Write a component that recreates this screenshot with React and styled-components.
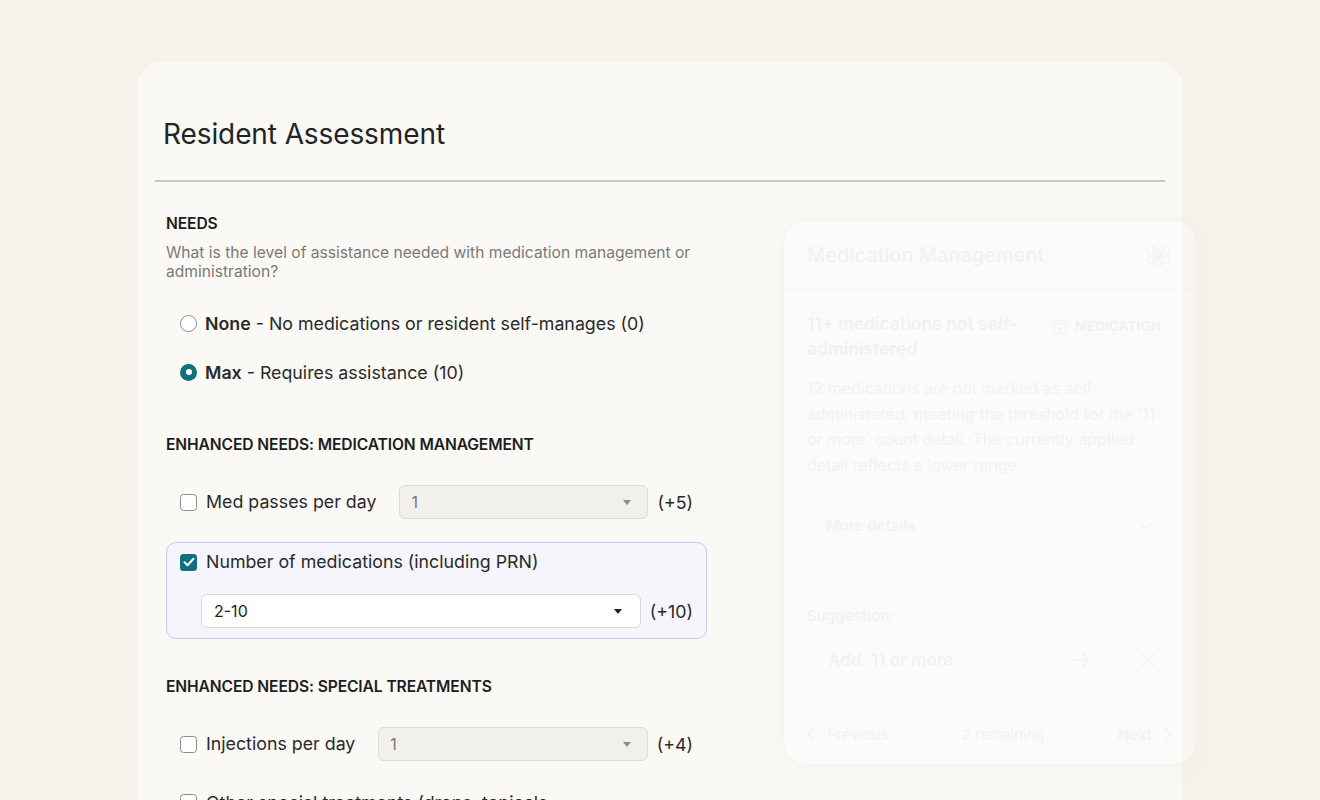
import React from "react";
import styled, { createGlobalStyle } from "styled-components";

const Global = createGlobalStyle`
  html, body { margin: 0; padding: 0; }
  body {
    background: #f6f1ea;
    font-family: Inter, "Noto Sans", "Liberation Sans", sans-serif;
    color: #262626;
    height: 800px;
    overflow: hidden;
  }
  * { box-sizing: border-box; }
`;

const Page = styled.div`
  padding: 62px 0 0 138px;
`;

const Card = styled.div`
  position: relative;
  width: 1044px;
  min-height: 900px;
  background: #faf9f6;
  border-radius: 24px;
  padding: 0 17px;
`;

const Header = styled.header`
  padding-top: 54px;
`;

const Title = styled.h1`
  margin: 0;
  padding-left: 8px;
  font-size: 28px;
  line-height: 36px;
  font-weight: 400;
  color: #222426;
  letter-spacing: -0.1px;
`;

const Divider = styled.div`
  margin-top: 28px;
  height: 2px;
  background: #cac8c4;
`;

const Body = styled.div`
  padding: 32px 0 0 11px;
  width: 552px;
`;

const Form = styled.div`
  width: 541px;
  display: flex;
  flex-direction: column;
`;

const SectionTitle = styled.h2`
  margin: ${(p) => p.$mt || 0}px 0 0;
  font-size: 15.6px;
  line-height: 20px;
  font-weight: 600;
  color: #1d1d1f;
  text-transform: uppercase;
  letter-spacing: -0.1px;
`;

const Question = styled.p`
  margin: 9px 0 0;
  font-size: 15.6px;
  line-height: 19px;
  color: #7b7a78;
`;

const RadioList = styled.div`
  margin-top: 30px;
  padding-left: 14px;
  display: flex;
  flex-direction: column;
  gap: 25px;
`;

const RadioRow = styled.label`
  display: flex;
  align-items: center;
  gap: 8px;
  height: 24px;
  font-size: 17.8px;
  color: #2a2a2c;
`;

const RadioDot = styled.span`
  width: 17px;
  height: 17px;
  border-radius: 50%;
  flex: none;
  background: ${(p) => (p.$on ? "#0f717c" : "#fff")};
  border: ${(p) => (p.$on ? "none" : "1.3px solid #8c8c8c")};
  display: flex;
  align-items: center;
  justify-content: center;
  &::after {
    content: "";
    display: ${(p) => (p.$on ? "block" : "none")};
    width: 6px;
    height: 6px;
    border-radius: 50%;
    background: #fff;
  }
`;

const Strong = styled.b`
  font-weight: 600;
`;

const OptionRow = styled.div`
  display: flex;
  align-items: center;
  padding: 0 14px;
  margin-top: ${(p) => p.$mt || 0}px;
`;

const Check = styled.span`
  width: 17px;
  height: 17px;
  flex: none;
  border-radius: 3.5px;
  background: ${(p) => (p.$on ? "#0f717c" : "#fff")};
  border: ${(p) => (p.$on ? "none" : "1.3px solid #8c8c8c")};
  display: flex;
  align-items: center;
  justify-content: center;
`;

const OptLabel = styled.span`
  margin-left: 9px;
  font-size: 17.8px;
  line-height: 24px;
  color: #2a2a2c;
  white-space: nowrap;
`;

const Select = styled.div`
  flex: 1;
  height: ${(p) => p.$h || 34}px;
  margin-left: ${(p) => p.$ml || 0}px;
  display: flex;
  align-items: center;
  justify-content: space-between;
  padding: 0 ${(p) => (p.$active ? 18 : 16)}px 0 ${(p) => (p.$active ? 12 : 11)}px;
  border-radius: 6px;
  background: ${(p) => (p.$active ? "#ffffff" : "#f1f0ed")};
  border: 1px solid ${(p) => (p.$active ? "#d8d8d8" : "#dddcd8")};
  font-size: 16px;
  color: ${(p) => (p.$active ? "#222" : "#7a7977")};
`;

const Caret = styled.span`
  width: 0;
  height: 0;
  border-left: 4.5px solid transparent;
  border-right: 4.5px solid transparent;
  border-top: 5px solid ${(p) => (p.$active ? "#1f1f1f" : "#8e8d8b")};
`;

const Points = styled.span`
  margin-left: 9px;
  font-size: 17.8px;
  color: #2a2a2c;
  white-space: nowrap;
`;

const Highlight = styled.div`
  margin-top: 23px;
  padding: 10px 13px 10px;
  border: 1.5px solid #c5cbf6;
  border-radius: 10px;
  background: #f5f5fb;
  display: flex;
  flex-direction: column;
`;

const HLTop = styled.div`
  display: flex;
  align-items: center;
  height: 18px;
`;

const HLSelectRow = styled.div`
  display: flex;
  align-items: center;
  margin-top: 23px;
  padding-left: 21px;
`;

const WrapRow = styled.div`
  display: flex;
  align-items: flex-start;
  padding: 0 14px;
  margin-top: 30px;
  & > ${Check} { margin-top: 3px; }
`;

const WrapLabel = styled.span`
  margin-left: 9px;
  max-width: 355px;
  font-size: 17.8px;
  line-height: 24px;
  color: #2a2a2c;
`;

/* ---------- faded overlay panel ---------- */

const Panel = styled.aside`
  position: absolute;
  left: 645px;
  top: 158px;
  width: 414px;
  height: 545px;
  border-radius: 22px;
  background: rgba(255, 255, 255, 0.3);
  border: 1px solid rgba(230, 226, 220, 0.3);
  box-shadow: 0 8px 30px rgba(120, 100, 80, 0.025);
  overflow: hidden;
`;

const PanelInner = styled.div`
  opacity: 0.04;
  height: 100%;
  display: flex;
  flex-direction: column;
  color: #222;
`;

const PanelHead = styled.div`
  height: 69px;
  padding: 0 24px 0 23px;
  display: flex;
  align-items: center;
  justify-content: space-between;
  border-bottom: 1px solid #999;
`;

const PanelTitle = styled.div`
  font-size: 20px;
  font-weight: 500;
`;

const PanelBody = styled.div`
  padding: 21px 24px 0 23px;
  display: flex;
  flex-direction: column;
`;

const FindingRow = styled.div`
  display: flex;
  justify-content: space-between;
  align-items: flex-start;
  gap: 12px;
`;

const FindingTitle = styled.div`
  font-size: 17.5px;
  font-weight: 600;
  line-height: 25px;
  width: 225px;
`;

const Badge = styled.div`
  display: flex;
  align-items: center;
  gap: 8px;
  height: 30px;
  padding: 0 10px;
  border: 1px solid #bbb;
  border-radius: 6px;
  font-size: 13px;
  font-weight: 700;
  letter-spacing: 0.3px;
`;

const PanelText = styled.p`
  margin: 15px 0 0;
  font-size: 16px;
  line-height: 25.7px;
  color: #333;
`;

const Disclosure = styled.div`
  margin-top: 33px;
  height: 28px;
  padding: 0 18px;
  display: flex;
  align-items: center;
  justify-content: space-between;
  border: 1px solid #ccc;
  font-size: 15px;
  font-weight: 600;
`;

const SuggestLabel = styled.div`
  margin-top: 66px;
  font-size: 15px;
  font-weight: 600;
`;

const SuggestRow = styled.div`
  margin-top: 11px;
  display: flex;
  align-items: center;
  gap: 12px;
`;

const SuggestBox = styled.div`
  flex: 1;
  height: 48px;
  padding: 0 20px;
  display: flex;
  align-items: center;
  justify-content: space-between;
  border: 1px solid #aaa;
  border-radius: 8px;
  font-size: 17px;
  font-weight: 600;
`;

const IconBtn = styled.div`
  width: 48px;
  height: 48px;
  border: 1px solid #aaa;
  border-radius: 6px;
  display: flex;
  align-items: center;
  justify-content: center;
`;

const PanelFoot = styled.div`
  margin-top: auto;
  height: 60px;
  padding: 0 24px 0 23px;
  display: flex;
  align-items: center;
  justify-content: space-between;
  font-size: 15px;
`;

const FootBtn = styled.div`
  display: flex;
  align-items: center;
  gap: 12px;
  font-weight: ${(p) => (p.$bold ? 600 : 400)};
`;

const Tick = () => (
  <svg width="12" height="10" viewBox="0 0 12 10" fill="none">
    <path d="M1.5 5.2 L4.5 8.2 L10.5 1.8" stroke="#fff" strokeWidth="2" strokeLinecap="round" strokeLinejoin="round" />
  </svg>
);

const Rosette = () => (
  <svg width="28" height="28" viewBox="0 0 28 28" fill="none" stroke="#555" strokeWidth="1.2">
    {[0, 60, 120, 180, 240, 300].map((a) => (
      <ellipse key={a} cx="14" cy="9" rx="5" ry="7" transform={`rotate(${a} 14 14)`} />
    ))}
  </svg>
);

export default function App() {
  return (
    <>
      <Global />
      <Page>
        <Card>
          <Header>
            <Title>Resident Assessment</Title>
            <Divider />
          </Header>
          <Body>
            <Form>
              <SectionTitle>Needs</SectionTitle>
              <Question>
                What is the level of assistance needed with medication management or administration?
              </Question>
              <RadioList>
                <RadioRow>
                  <RadioDot />
                  <span>
                    <Strong>None</Strong> - No medications or resident self-manages (0)
                  </span>
                </RadioRow>
                <RadioRow>
                  <RadioDot $on />
                  <span>
                    <Strong>Max</Strong> - Requires assistance (10)
                  </span>
                </RadioRow>
              </RadioList>

              <SectionTitle $mt={51}>Enhanced Needs: Medication Management</SectionTitle>
              <OptionRow $mt={30}>
                <Check />
                <OptLabel>Med passes per day</OptLabel>
                <Select $ml={23} $h={34}>
                  <span>1</span>
                  <Caret />
                </Select>
                <Points>(+5)</Points>
              </OptionRow>

              <Highlight>
                <HLTop>
                  <Check $on>
                    <Tick />
                  </Check>
                  <OptLabel>Number of medications (including PRN)</OptLabel>
                </HLTop>
                <HLSelectRow>
                  <Select $active $h={34}>
                    <span>2-10</span>
                    <Caret $active />
                  </Select>
                  <Points>(+10)</Points>
                </HLSelectRow>
              </Highlight>

              <SectionTitle $mt={38}>Enhanced Needs: Special Treatments</SectionTitle>
              <OptionRow $mt={30}>
                <Check />
                <OptLabel>Injections per day</OptLabel>
                <Select $ml={23} $h={34}>
                  <span>1</span>
                  <Caret />
                </Select>
                <Points>(+4)</Points>
              </OptionRow>
              <WrapRow>
                <Check />
                <WrapLabel>Other special treatments (drops, topicals, dressings, etc.)</WrapLabel>
              </WrapRow>
            </Form>
          </Body>

          <Panel>
            <PanelInner>
              <PanelHead>
                <PanelTitle>Medication Management</PanelTitle>
                <Rosette />
              </PanelHead>
              <PanelBody>
                <FindingRow>
                  <FindingTitle>11+ medications not self-administered</FindingTitle>
                  <Badge>
                    <svg width="14" height="16" viewBox="0 0 14 16" fill="none" stroke="#333" strokeWidth="1.4">
                      <rect x="1" y="3" width="12" height="12" rx="1.5" />
                      <path d="M1 6h12M4 1v3M10 1v3M7 8.5v4M5 10.5h4" />
                    </svg>
                    MEDICATION
                  </Badge>
                </FindingRow>
                <PanelText>
                  12 medications are not marked as self-administered, meeting the threshold for the '11 or more' count detail. The currently applied detail reflects a lower range.
                </PanelText>
                <Disclosure>
                  <span>More details</span>
                  <svg width="14" height="8" viewBox="0 0 14 8" fill="none" stroke="#333" strokeWidth="1.6">
                    <path d="M1 1l6 6 6-6" />
                  </svg>
                </Disclosure>
                <SuggestLabel>Suggestion:</SuggestLabel>
                <SuggestRow>
                  <SuggestBox>
                    <span>Add: 11 or more</span>
                    <svg width="20" height="16" viewBox="0 0 20 16" fill="none" stroke="#333" strokeWidth="1.6">
                      <path d="M1 8h17M11 1l7 7-7 7" />
                    </svg>
                  </SuggestBox>
                  <IconBtn>
                    <svg width="16" height="16" viewBox="0 0 16 16" fill="none" stroke="#333" strokeWidth="1.6">
                      <path d="M2 2l12 12M14 2L2 14" />
                    </svg>
                  </IconBtn>
                </SuggestRow>
              </PanelBody>
              <PanelFoot>
                <FootBtn>
                  <svg width="8" height="14" viewBox="0 0 8 14" fill="none" stroke="#333" strokeWidth="1.6">
                    <path d="M7 1L1 7l6 6" />
                  </svg>
                  <span>Previous</span>
                </FootBtn>
                <span>2 remaining</span>
                <FootBtn $bold>
                  <span>Next</span>
                  <svg width="8" height="14" viewBox="0 0 8 14" fill="none" stroke="#333" strokeWidth="1.6">
                    <path d="M1 1l6 6-6 6" />
                  </svg>
                </FootBtn>
              </PanelFoot>
            </PanelInner>
          </Panel>
        </Card>
      </Page>
    </>
  );
}
